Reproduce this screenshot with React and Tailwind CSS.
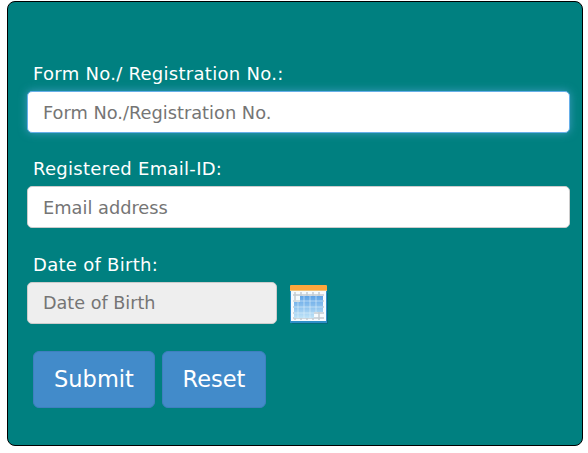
import React from 'react';

const font = "font-['DejaVu_Sans',sans-serif]";

const Field = ({ label, placeholder, focused }) => (
    <div className="flex flex-col">
        <label className="ml-[6px] h-[30px] text-[18px] leading-[25px] tracking-[0.28px] text-white">{label}</label>
        <input
            type="text"
            placeholder={placeholder}
            className={`h-[42px] w-full rounded-[5px] border bg-white px-[15px] text-[17.8px] outline-none placeholder:text-[#757575] ${focused ? 'border-[#66afe9] shadow-[0_0_8px_rgba(102,175,233,0.6)]' : 'border-[#ccc]'}`}
        />
    </div>
);

const CalendarIcon = () => (
    <svg width="38" height="39" viewBox="0 0 38 39" className="mt-[3px]">
        <defs>
            <linearGradient id="cal" x1="0" y1="0" x2="0" y2="1">
                <stop offset="0" stopColor="#5fa3e6" />
                <stop offset="1" stopColor="#bfe3f7" />
            </linearGradient>
        </defs>
        <rect x="2" y="8" width="36" height="31" fill="#0b5f78" opacity="0.6" />
        <rect x="0" y="6" width="37" height="32" fill="#2f8fc8" />
        <rect x="1" y="6" width="35" height="30" fill="#f6fbfe" />
        <rect x="0" y="0" width="37" height="6" rx="1" fill="#fda63c" />
        <rect x="0" y="5" width="37" height="1" fill="#f2c27c" />
        <path d="M5 7v28M11 7v28M17 7v28M23 7v28M29 7v28M3 10h31M3 16h31M3 22h31M3 28h31M3 33h31" stroke="#c4ccd2" strokeWidth="1.5" fill="none" />
        <path d="M10 11H33V27H24V33H4V17H10Z" fill="url(#cal)" />
        <path d="M8 17v16M14 11v22M20 11v22M26 11v16M3 16h30M4 22h29M4 28h20" stroke="#e8f4fb" strokeWidth="1" opacity="0.55" fill="none" />
    </svg>
);

const App = () => {
    return (
        <div className={`h-[453px] w-[588px] bg-white pt-px ${font}`}>
            <div className="ml-[7px] flex h-[445px] w-[576px] flex-col rounded-[8px] border border-black bg-[#008080] pl-[19px] pr-[12px] pt-[59px]">
                <div className="flex flex-col gap-[23px]">
                    <Field label="Form No./ Registration No.:" placeholder="Form No./Registration No." focused />
                    <Field label="Registered Email-ID:" placeholder="Email address" />
                    <div className="mt-px flex flex-col">
                        <label className="ml-[6px] h-[30px] text-[18px] leading-[25px] tracking-[0.28px] text-white">Date of Birth:</label>
                        <div className="flex items-center gap-[13px]">
                            <input
                                type="text"
                                disabled
                                placeholder="Date of Birth"
                                className="h-[42px] w-[250px] rounded-[5px] border border-[#ccc] bg-[#eee] px-[15px] text-[17.6px] placeholder:text-[#757575]"
                            />
                            <CalendarIcon />
                        </div>
                    </div>
                </div>
                <div className="ml-[6px] mt-[27px] flex gap-[7px]">
                    <button className="h-[57px] w-[122px] rounded-[6px] border border-[#3f7fbf] bg-[#428bca] text-[22.5px] text-white">Submit</button>
                    <button className="h-[57px] w-[104px] rounded-[6px] border border-[#3f7fbf] bg-[#428bca] text-[22.5px] text-white">Reset</button>
                </div>
            </div>
        </div>
    );
};

export default App;
